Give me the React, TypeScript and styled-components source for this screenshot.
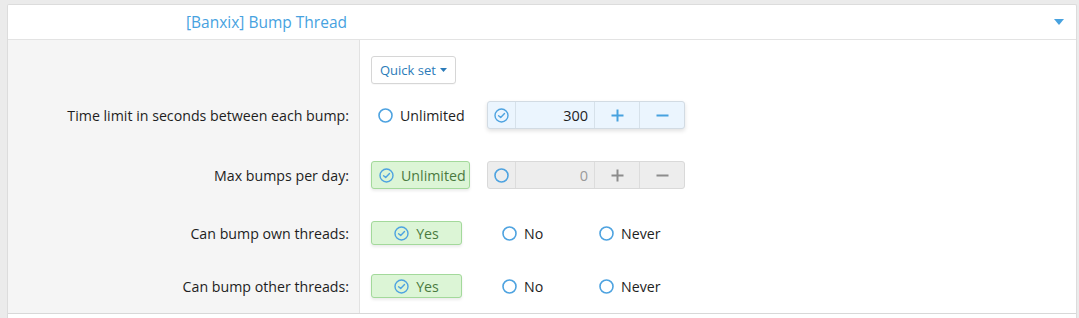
import React from "react";
import styled, { createGlobalStyle } from "styled-components";

const Global = createGlobalStyle`
  html, body { margin: 0; padding: 0; background: #ebebeb; }
  body { font-family: "Open Sans", "Noto Sans", Arial, sans-serif; font-size: 14.2px; color: #141414; }
  svg { flex: none; display: block; }
`;

const Page = styled.div`
  padding: 4px 2px 0 7px;
`;

const Panel = styled.div`
  background: #fff;
  border: 1px solid #dcdcdc;
  border-bottom: none;
  border-radius: 2px 2px 0 0;
`;

const Header = styled.div`
  height: 34px;
  display: flex;
  align-items: center;
  justify-content: space-between;
  border-bottom: 1px solid #e3e3e3;
  padding: 0 12px 0 178px;
`;

const Title = styled.span`
  color: #47a2df;
  font-size: 15.5px;
`;

const Body = styled.div`
  border-bottom: 1px solid #d8d8d8;
`;

const Row = styled.div<{ $pt: number; $pb: number }>`
  display: grid;
  grid-template-columns: 352px 1fr;
  & > div {
    padding-top: ${(p) => p.$pt}px;
    padding-bottom: ${(p) => p.$pb}px;
  }
`;

const LabelCell = styled.div`
  background: #f5f5f5;
  border-right: 1px solid #e2e2e2;
  display: flex;
  align-items: center;
  justify-content: flex-end;
  padding-right: 10px;
  color: #1e1e1e;
`;

const ControlCell = styled.div`
  display: flex;
  align-items: center;
  padding-left: 11px;
`;

const QuickSet = styled.button`
  height: 28px;
  padding: 0 8px;
  display: flex;
  align-items: center;
  gap: 4px;
  border: 1px solid #d6d6d6;
  border-radius: 3px;
  background: #fff;
  color: #2b7bb9;
  font-family: inherit;
  font-size: 13px;
  box-shadow: 0 1px 1px rgba(0, 0, 0, 0.03);
`;

const Choice = styled.label<{ $w: number; $center?: boolean }>`
  box-sizing: border-box;
  width: ${(p) => p.$w}px;
  flex: none;
  display: flex;
  align-items: center;
  justify-content: ${(p) => (p.$center ? "center" : "flex-start")};
  gap: 7px;
  padding: 0 7px;
  color: #1e1e1e;
`;

const SelectedChoice = styled.label<{ $w: number; $h: number; $center?: boolean }>`
  box-sizing: border-box;
  width: ${(p) => p.$w}px;
  height: ${(p) => p.$h}px;
  flex: none;
  display: flex;
  align-items: center;
  justify-content: ${(p) => (p.$center ? "center" : "flex-start")};
  gap: 7px;
  padding: 0 7px;
  background: #dcf5d6;
  border: 1px solid #a3d99b;
  border-radius: 3px;
  color: #4a7a3f;
  box-shadow: 0 2px 3px rgba(0, 0, 0, 0.08);
`;

const Gap = styled.div<{ $w: number }>`
  width: ${(p) => p.$w}px;
  flex: none;
`;

const Spin = styled.div<{ $disabled?: boolean }>`
  display: grid;
  grid-template-columns: 27px 79px 45px 45px;
  height: 28px;
  box-sizing: border-box;
  border: 1px solid ${(p) => (p.$disabled ? "#d9d9d9" : "#d2dbe3")};
  border-radius: 3px;
  background: ${(p) => (p.$disabled ? "#ededed" : "#ebf5fe")};
  box-shadow: ${(p) => (p.$disabled ? "none" : "0 2px 4px rgba(0,0,0,0.12)")};
  overflow: hidden;
`;

const SpinCell = styled.div<{ $disabled?: boolean; $right?: boolean }>`
  display: flex;
  align-items: center;
  justify-content: ${(p) => (p.$right ? "flex-end" : "center")};
  padding-right: ${(p) => (p.$right ? "6px" : "0")};
  border-left: 1px solid ${(p) => (p.$disabled ? "#dcdcdc" : "#d6e1ea")};
  &:first-child { border-left: none; }
  font-size: 14.5px;
  color: ${(p) => (p.$disabled ? "#9a9a9a" : "#1e1e1e")};
`;

const Ring = () => (
  <svg width="15" height="15" viewBox="0 0 15 15">
    <circle cx="7.5" cy="7.5" r="6.5" fill="none" stroke="#4ea3e0" strokeWidth="1.6" />
  </svg>
);

const Check = () => (
  <svg width="15" height="15" viewBox="0 0 15 15">
    <circle cx="7.5" cy="7.5" r="6.5" fill="none" stroke="#4ea3e0" strokeWidth="1.4" />
    <path d="M4.6 7.7 L6.7 9.6 L10.5 5.6" fill="none" stroke="#4ea3e0" strokeWidth="1.4" strokeLinecap="round" strokeLinejoin="round" />
  </svg>
);

const Plus = ({ color }: { color: string }) => (
  <svg width="13" height="13" viewBox="0 0 13 13">
    <path d="M6.5 0.5 V12.5 M0.5 6.5 H12.5" stroke={color} strokeWidth="2" />
  </svg>
);

const Minus = ({ color }: { color: string }) => (
  <svg width="13" height="13" viewBox="0 0 13 13">
    <path d="M0.5 6.5 H12.5" stroke={color} strokeWidth="2" />
  </svg>
);

const Caret = ({ color, w, h }: { color: string; w: number; h: number }) => (
  <svg width={w} height={h} viewBox={`0 0 ${w} ${h}`}>
    <path d={`M0 0 H${w} L${w / 2} ${h} Z`} fill={color} />
  </svg>
);

const SpinBox = ({ value, disabled }: { value: string; disabled?: boolean }) => {
  const c = disabled ? "#8c8c8c" : "#47a2df";
  return (
    <Spin $disabled={disabled}>
      <SpinCell $disabled={disabled}>{disabled ? <Ring /> : <Check />}</SpinCell>
      <SpinCell $disabled={disabled} $right>{value}</SpinCell>
      <SpinCell $disabled={disabled}><Plus color={c} /></SpinCell>
      <SpinCell $disabled={disabled}><Minus color={c} /></SpinCell>
    </Spin>
  );
};

const YesNoNever = () => (
  <>
    <SelectedChoice $w={91} $h={24} $center>
      <Check />
      Yes
    </SelectedChoice>
    <Gap $w={33} />
    <Choice $w={97}>
      <Ring />
      No
    </Choice>
    <Choice $w={97}>
      <Ring />
      Never
    </Choice>
  </>
);

const Footer = styled.div`
  height: 6px;
  background: #fff;
`;

export default function App() {
  return (
    <>
      <Global />
      <Page>
        <Panel>
          <Header>
            <Title>[Banxix] Bump Thread</Title>
            <Caret color="#47a2df" w={10} h={6} />
          </Header>
          <Body>
            <Row $pt={16} $pb={8}>
              <LabelCell />
              <ControlCell>
                <QuickSet>
                  Quick set
                  <Caret color="#2b7bb9" w={7} h={4} />
                </QuickSet>
              </ControlCell>
            </Row>
            <Row $pt={9} $pb={16}>
              <LabelCell>Time limit in seconds between each bump:</LabelCell>
              <ControlCell>
                <Choice $w={99}>
                  <Ring />
                  Unlimited
                </Choice>
                <Gap $w={17} />
                <SpinBox value="300" />
              </ControlCell>
            </Row>
            <Row $pt={16} $pb={16}>
              <LabelCell>Max bumps per day:</LabelCell>
              <ControlCell>
                <SelectedChoice $w={99} $h={28}>
                  <Check />
                  Unlimited
                </SelectedChoice>
                <Gap $w={17} />
                <SpinBox value="0" disabled />
              </ControlCell>
            </Row>
            <Row $pt={16} $pb={14}>
              <LabelCell>Can bump own threads:</LabelCell>
              <ControlCell>
                <YesNoNever />
              </ControlCell>
            </Row>
            <Row $pt={15} $pb={15}>
              <LabelCell>Can bump other threads:</LabelCell>
              <ControlCell>
                <YesNoNever />
              </ControlCell>
            </Row>
          </Body>
          <Footer />
        </Panel>
      </Page>
    </>
  );
}
